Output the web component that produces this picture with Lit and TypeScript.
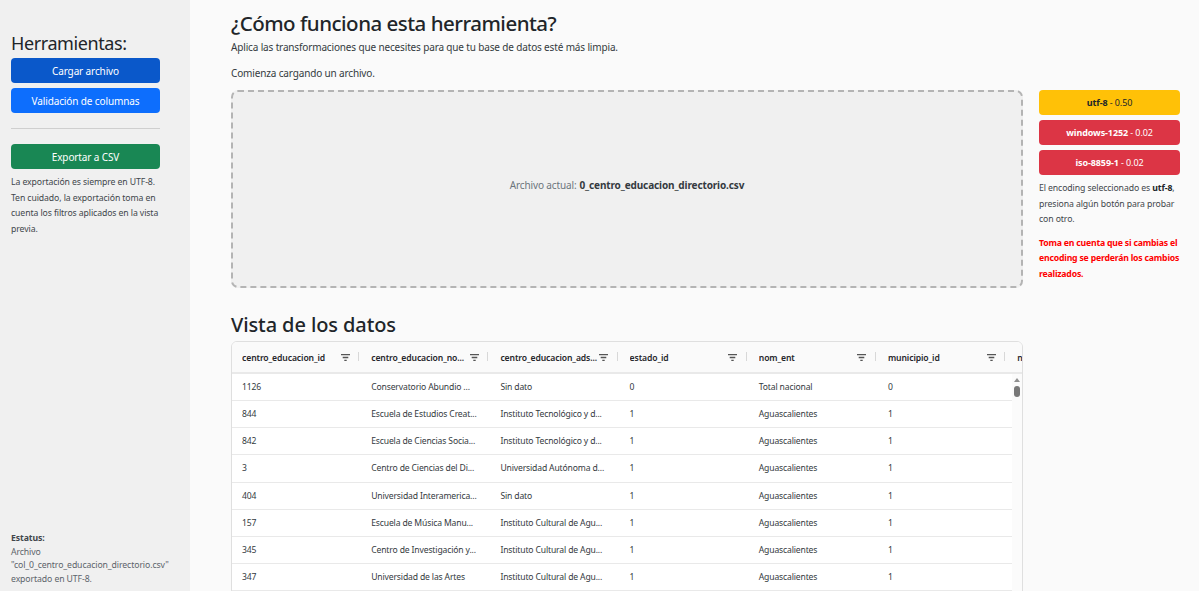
import { LitElement, html, css, svg } from "lit";
import { customElement } from "lit/decorators.js";

const COLS = ["centro_educacion_id", "centro_educacion_no...", "centro_educacion_ads...", "estado_id", "nom_ent", "municipio_id"];
const ROWS = [
  ["1126", "Conservatorio Abundio ...", "Sin dato", "0", "Total nacional", "0"],
  ["844", "Escuela de Estudios Creat...", "Instituto Tecnológico y d...", "1", "Aguascalientes", "1"],
  ["842", "Escuela de Ciencias Socia...", "Instituto Tecnológico y d...", "1", "Aguascalientes", "1"],
  ["3", "Centro de Ciencias del Di...", "Universidad Autónoma d...", "1", "Aguascalientes", "1"],
  ["404", "Universidad Interamerica...", "Sin dato", "1", "Aguascalientes", "1"],
  ["157", "Escuela de Música Manu...", "Instituto Cultural de Agu...", "1", "Aguascalientes", "1"],
  ["345", "Centro de Investigación y...", "Instituto Cultural de Agu...", "1", "Aguascalientes", "1"],
  ["347", "Universidad de las Artes", "Instituto Cultural de Agu...", "1", "Aguascalientes", "1"],
];

const filterIcon = svg`<svg class="fi" viewBox="0 0 9 7" width="9" height="7"><path d="M0 .7h9M1.7 3.5h5.6M3.3 6.3h2.4" stroke="#555" stroke-width="1.3" fill="none"/></svg>`;

@customElement("app-root")
export class AppRoot extends LitElement {
  static styles = css`
    :host { display: block; height: 591px; overflow: hidden; font-family: "Noto Sans", "Open Sans", sans-serif; color: #212529; background: #fafafa; }
    * { box-sizing: border-box; }
    .page { display: flex; height: 591px; overflow: hidden; }
    .side { width: 190px; flex: none; background: #f0f0f0; padding: 31px 30px 5px 11px; display: flex; flex-direction: column; }
    .side h2 { margin: 0 0 3px; font-size: 18px; line-height: 24px; font-weight: 400; letter-spacing: -.4px; }
    .btn { display: flex; align-items: center; justify-content: center; height: 25px; border-radius: 4px; color: #fff; font-size: 10px; letter-spacing: -.12px; white-space: nowrap; }
    .dark { background: #0a58ca; margin-bottom: 5px; }
    .blue { background: #0d6efd; }
    .green { background: #198754; }
    hr { border: none; border-top: 1px solid #cfcfcf; margin: 15px 0 15px; width: 100%; }
    .note { margin: 6px 0 0; font-size: 8.7px; line-height: 15.6px; letter-spacing: -.1px; color: #41464b; }
    .status { margin-top: auto; font-size: 8.7px; line-height: 13.5px; letter-spacing: -.1px; color: #5c636a; }
    .status b { color: #41464b; display: block; }
    .main { flex: 1; min-width: 0; padding: 8px 19px 0 41px; }
    h1 { margin: 0; font-size: 20.5px; line-height: 31px; font-weight: 500; letter-spacing: -.5px; }
    .p { margin: 0; font-size: 10px; line-height: 16px; letter-spacing: -.15px; color: #343a40; }
    .p.b { margin-top: 10px; }
    .top { display: flex; gap: 16px; margin-top: 9px; }
    .drop { width: 792px; height: 198px; flex: none; background: #f0f0f0; border: 2px dashed #b4b4b4; border-radius: 7px; display: flex; align-items: center; justify-content: center; padding-bottom: 9px; font-size: 10px; letter-spacing: -.13px; color: #6c757d; }
    .drop b { color: #343a40; font-weight: 700; margin-left: 3px; }
    .enc { width: 141px; flex: none; }
    .e { display: flex; align-items: center; justify-content: center; height: 25px; border-radius: 4px; font-size: 9px; letter-spacing: -.1px; margin-bottom: 5px; white-space: pre; }
    .y { background: #ffc107; color: #212529; }
    .r { background: #dc3545; color: #fff; }
    .enc p { margin: 0; font-size: 8.7px; line-height: 15.6px; letter-spacing: -.1px; color: #41464b; }
    .enc p b { color: #212529; }
    .enc p.first { margin-top: 6px; }
    .enc p.warn { margin-top: 8px; color: #f00; font-weight: 700; letter-spacing: -.2px; }
    .sub { margin: 23px 0 0; font-size: 20px; line-height: 28px; font-weight: 500; letter-spacing: -.1px; }
    .grid { margin-top: 2px; width: 792px; border: 1px solid #dfdfdf; border-radius: 6px 6px 0 0; background: #fff; overflow: hidden; position: relative; }
    .hd { display: flex; height: 32px; padding-top: 1px; background: #fafafa; border-bottom: 2px solid #e9e9e9; align-items: center; overflow: hidden; }
    .hc { width: 129.2px; flex: none; display: flex; align-items: center; padding-left: 10px; padding-right: 11.5px; font-size: 8.6px; font-weight: 600; letter-spacing: -.1px; color: #26262a; white-space: nowrap; position: relative; }
    .hc span { flex: 1; min-width: 0; overflow: hidden; }
    .hc::after { content: ""; position: absolute; right: 2px; top: 0; height: 9px; border-right: 1px solid #d8d8d8; }
    .fi { flex: none; }
    .rw { display: flex; height: 27.15px; border-bottom: 1px solid #e9e9e9; align-items: center; background: #fff; overflow: hidden; margin-right: 10px; }
    .c { width: 129.2px; flex: none; padding-left: 10px; font-size: 8.6px; letter-spacing: -.15px; color: #343a40; white-space: nowrap; overflow: hidden; }
    .more { padding-left: 10px; font-size: 8.6px; font-weight: 600; color: #26262a; flex: none; }
    .sb { position: absolute; top: 32px; right: 0; bottom: 0; width: 10px; background: #fbfbfb; }
    .up { position: absolute; top: 4px; left: 2px; width: 0; height: 0; border: 3px solid transparent; border-top: none; border-bottom: 4px solid #8f8f8f; }
    .th { position: absolute; top: 12px; left: 2px; width: 6px; height: 11px; border-radius: 3px; background: #787878; }
  `;

  render() {
    return html`<div class="page">
      <aside class="side">
        <h2>Herramientas:</h2>
        <div class="btn dark">Cargar archivo</div>
        <div class="btn blue">Validación de columnas</div>
        <hr />
        <div class="btn green">Exportar a CSV</div>
        <p class="note">La exportación es siempre en UTF-8.<br />Ten cuidado, la exportación toma en cuenta los filtros aplicados en la vista previa.</p>
        <div class="status"><b>Estatus:</b>Archivo<br />"col_0_centro_educacion_directorio.csv"<br />exportado en UTF-8.</div>
      </aside>
      <main class="main">
        <h1>¿Cómo funciona esta herramienta?</h1>
        <p class="p a">Aplica las transformaciones que necesites para que tu base de datos esté más limpia.</p>
        <p class="p b">Comienza cargando un archivo.</p>
        <div class="top">
          <div class="drop">Archivo actual: <b>0_centro_educacion_directorio.csv</b></div>
          <div class="enc">
            <div class="e y"><b>utf-8</b> - 0.50</div>
            <div class="e r"><b>windows-1252</b> - 0.02</div>
            <div class="e r"><b>iso-8859-1</b> - 0.02</div>
            <p class="first">El encoding seleccionado es <b>utf-8</b>, presiona algún botón para probar con otro.</p>
            <p class="warn">Toma en cuenta que si cambias el encoding se perderán los cambios realizados.</p>
          </div>
        </div>
        <h2 class="sub">Vista de los datos</h2>
        <div class="grid">
          <div class="hd">
            ${COLS.map((c) => html`<div class="hc"><span>${c}</span>${filterIcon}</div>`)}
            <div class="more">n</div>
          </div>
          ${ROWS.map((r) => html`<div class="rw">${r.map((v) => html`<div class="c">${v}</div>`)}</div>`)}
          <div class="sb"><div class="up"></div><div class="th"></div></div>
        </div>
      </main>
    </div>`;
  }
}
